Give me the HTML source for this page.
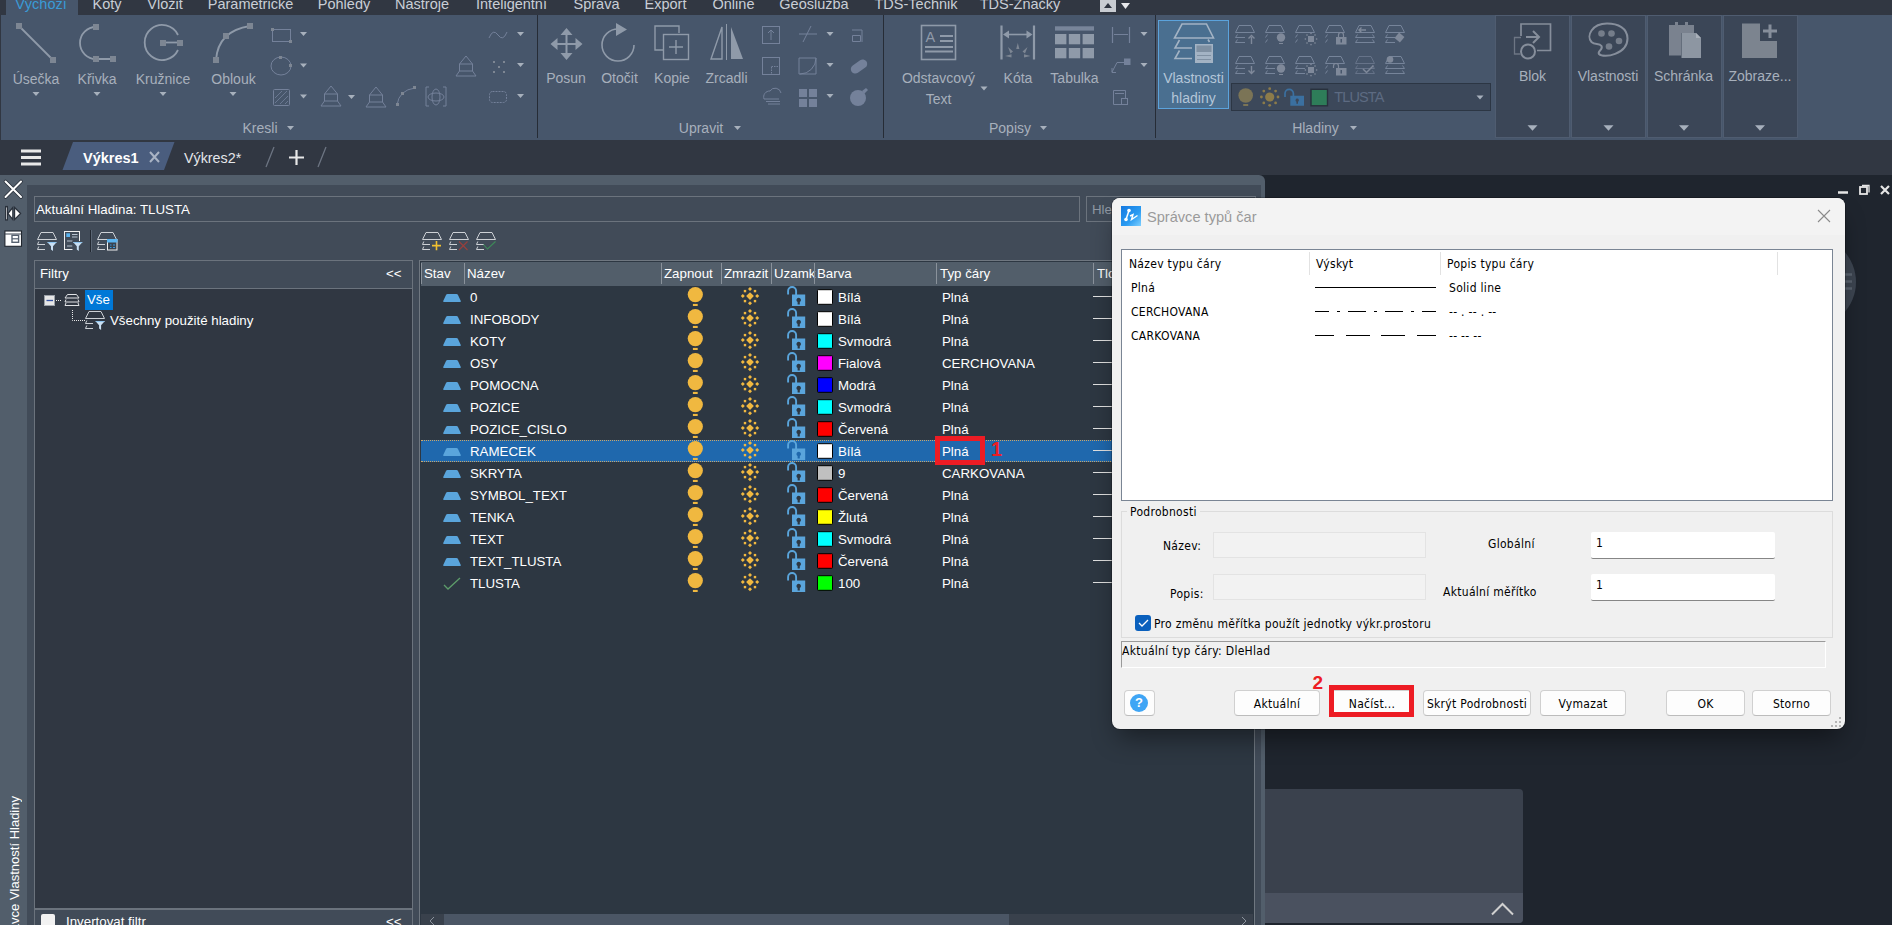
<!DOCTYPE html><html lang="cs"><head><meta charset="utf-8"><title>Správce typů čar</title><style>
*{box-sizing:border-box}
html,body{margin:0;padding:0}
body{width:1892px;height:925px;overflow:hidden;position:relative;background:#1f252e;font-family:"Liberation Sans",sans-serif}
.a{position:absolute}
.t{position:absolute;white-space:nowrap;overflow:visible}
svg{position:absolute;left:0;top:0;overflow:visible}
.dlg{font-family:"DejaVu Sans Condensed","DejaVu Sans","Liberation Sans",sans-serif;letter-spacing:0.3px}
</style></head><body>
<div class="a" style="left:0px;top:0px;width:1892px;height:15px;background:#313742;"></div>
<div class="a" style="left:6px;top:0px;width:72px;height:15px;background:#47566b;"></div>
<div class="t" style="left:-79.0px;width:240px;text-align:center;top:-5.2px;height:18.5px;line-height:18.5px;font-size:14.5px;color:#3a9bd6;">Výchozí</div>
<div class="t" style="left:-13.0px;width:240px;text-align:center;top:-5.2px;height:18.5px;line-height:18.5px;font-size:14.5px;color:#c9ced6;">Koty</div>
<div class="t" style="left:45.0px;width:240px;text-align:center;top:-5.2px;height:18.5px;line-height:18.5px;font-size:14.5px;color:#c9ced6;">Vložit</div>
<div class="t" style="left:130.5px;width:240px;text-align:center;top:-5.2px;height:18.5px;line-height:18.5px;font-size:14.5px;color:#c9ced6;">Parametrické</div>
<div class="t" style="left:224.0px;width:240px;text-align:center;top:-5.2px;height:18.5px;line-height:18.5px;font-size:14.5px;color:#c9ced6;">Pohledy</div>
<div class="t" style="left:302.0px;width:240px;text-align:center;top:-5.2px;height:18.5px;line-height:18.5px;font-size:14.5px;color:#c9ced6;">Nástroje</div>
<div class="t" style="left:391.5px;width:240px;text-align:center;top:-5.2px;height:18.5px;line-height:18.5px;font-size:14.5px;color:#c9ced6;">Inteligentní</div>
<div class="t" style="left:476.5px;width:240px;text-align:center;top:-5.2px;height:18.5px;line-height:18.5px;font-size:14.5px;color:#c9ced6;">Správa</div>
<div class="t" style="left:545.5px;width:240px;text-align:center;top:-5.2px;height:18.5px;line-height:18.5px;font-size:14.5px;color:#c9ced6;">Export</div>
<div class="t" style="left:613.5px;width:240px;text-align:center;top:-5.2px;height:18.5px;line-height:18.5px;font-size:14.5px;color:#c9ced6;">Online</div>
<div class="t" style="left:694.0px;width:240px;text-align:center;top:-5.2px;height:18.5px;line-height:18.5px;font-size:14.5px;color:#c9ced6;">Geoslužba</div>
<div class="t" style="left:796.0px;width:240px;text-align:center;top:-5.2px;height:18.5px;line-height:18.5px;font-size:14.5px;color:#c9ced6;">TDS-Technik</div>
<div class="t" style="left:900.0px;width:240px;text-align:center;top:-5.2px;height:18.5px;line-height:18.5px;font-size:14.5px;color:#c9ced6;">TDS-Značky</div>
<div class="a" style="left:1100px;top:0px;width:16px;height:12px;background:#c8ccd2;"></div>
<svg width="1892" height="15"><path d="M1104 8 L1108 3 L1112 8Z" fill="#2e3440"/><path d="M1121 3 L1130 3 L1125.5 9Z" fill="#e6e8eb"/></svg>
<div class="a" style="left:0px;top:15px;width:1892px;height:125px;background:#313742;"></div>
<div class="a" style="left:1px;top:15px;width:1891px;height:125px;background:#47566b;"></div>
<div class="a" style="left:537px;top:15px;width:1px;height:123px;background:#262c36;"></div>
<div class="a" style="left:883px;top:15px;width:1px;height:123px;background:#262c36;"></div>
<div class="a" style="left:1155px;top:15px;width:1px;height:123px;background:#262c36;"></div>
<div class="a" style="left:1495px;top:15px;width:75px;height:122.5px;background:#3b4657;border:1px solid #4f5c70"></div>
<div class="a" style="left:1571px;top:15px;width:75px;height:122.5px;background:#3b4657;border:1px solid #4f5c70"></div>
<div class="a" style="left:1647px;top:15px;width:75px;height:122.5px;background:#3b4657;border:1px solid #4f5c70"></div>
<div class="a" style="left:1723px;top:15px;width:75px;height:122.5px;background:#3b4657;border:1px solid #4f5c70"></div>
<div class="t" style="left:925.5px;top:28.0px;height:18.5px;line-height:18.5px;font-size:14.5px;color:#8f9aa9;">A</div>
<div class="a" style="left:1158px;top:20px;width:71px;height:89px;background:#4a6f90;border:1px solid #5ba3dc"></div>
<div class="a" style="left:1231px;top:83px;width:260px;height:28px;background:#3c485a;border:1px solid #2c3644"></div>
<div class="t" style="left:1334.3px;top:88.2px;height:18.5px;line-height:18.5px;font-size:14.5px;color:#5d6b82;letter-spacing:-0.9px">TLUSTA</div>
<svg width="1892" height="140"><g fill="none" stroke="#8f9aa9" stroke-width="1.800"><path d="M19 26 L53 60"/><path d="M96 27 A16 16 0 0 0 96 59 L113 59"/><path d="M178 35 A17.5 17.5 0 1 0 178 50"/><path d="M162 42.5 L180 42.5"/><path d="M216 60 Q218 31 250 26"/></g><g fill="#7d8693"><rect x="16" y="23" width="6" height="6"/><rect x="50" y="57" width="6" height="6"/><rect x="93" y="24" width="6" height="6"/><rect x="93" y="56" width="6" height="6"/><rect x="110" y="56" width="6" height="6"/><rect x="160" y="40" width="6" height="6"/><rect x="177" y="40" width="6" height="6"/><rect x="213" y="57" width="6" height="6"/><rect x="223" y="33" width="6" height="6"/><rect x="247" y="23" width="6" height="6"/></g><g fill="none" stroke="#74819a" stroke-width="1"><rect x="272.5" y="29.5" width="18" height="12"/><ellipse cx="281" cy="66" rx="10" ry="9"/><rect x="273.5" y="89.5" width="16" height="16" rx="1"/><path d="M275 103 L287 91 M275 98 L282 91 M280 104 L288 96 M285 104 L288 101" stroke-width="0.8"/><path d="M331 86 L324.5 94 L337.5 94Z M324.5 94 L324.5 101 L337.5 101 L337.5 94 M324.5 101 L321 106 L341 106 L337.5 101"/><path d="M376 87 L369.5 95 L382.5 95Z M369.5 95 L369.5 102 L382.5 102 L382.5 95 M369.5 102 L366 107 L386 107 L382.5 102"/><path d="M466 56 L459.5 64 L472.5 64Z M459.5 64 L459.5 71 L472.5 71 L472.5 64 M459.5 71 L456 76 L476 76 L472.5 71"/><path d="M397 105 Q399 90 415 88"/><path d="M429 87 L426 87 L426 106 L429 106 M443 87 L446 87 L446 106 L443 106"/><ellipse cx="436" cy="97" rx="4" ry="8"/><ellipse cx="436" cy="97" rx="8" ry="4"/><path d="M489 38 Q493 28 498 35 T507 32"/><rect x="489.5" y="91.5" width="17" height="11" rx="3" stroke-dasharray="2 1"/></g><g fill="#7d8693"><rect x="271" y="28" width="3" height="3"/><rect x="289" y="40" width="3" height="3"/><rect x="279" y="56" width="3" height="3"/><rect x="289" y="64" width="3" height="3"/><rect x="396" y="103" width="3" height="3"/><rect x="401" y="92" width="3" height="3"/><rect x="413" y="86" width="3" height="3"/><rect x="493" y="61" width="2" height="2"/><rect x="503" y="61" width="2" height="2"/><rect x="498" y="66" width="2" height="2"/><rect x="493" y="71" width="2" height="2"/><rect x="503" y="71" width="2" height="2"/></g><path d="M32.5 92.0 L39.5 92.0 L36 96.0Z" fill="#a7b0bc"/><path d="M93.5 92.0 L100.5 92.0 L97 96.0Z" fill="#a7b0bc"/><path d="M159.5 92.0 L166.5 92.0 L163 96.0Z" fill="#a7b0bc"/><path d="M229.5 92.0 L236.5 92.0 L233 96.0Z" fill="#a7b0bc"/><path d="M300.0 32.0 L307.0 32.0 L303.5 36.0Z" fill="#a7b0bc"/><path d="M300.0 63.5 L307.0 63.5 L303.5 67.5Z" fill="#a7b0bc"/><path d="M300.0 94.5 L307.0 94.5 L303.5 98.5Z" fill="#a7b0bc"/><path d="M348.0 95.0 L355.0 95.0 L351.5 99.0Z" fill="#a7b0bc"/><path d="M517.0 32.0 L524.0 32.0 L520.5 36.0Z" fill="#a7b0bc"/><path d="M517.0 63.0 L524.0 63.0 L520.5 67.0Z" fill="#a7b0bc"/><path d="M517.0 94.0 L524.0 94.0 L520.5 98.0Z" fill="#a7b0bc"/><path d="M287.0 126.0 L294.0 126.0 L290.5 130.0Z" fill="#a7b0bc"/><g fill="none" stroke="#8f9aa9" stroke-width="1.6"><path d="M566.5 33 L566.5 55 M555 44 L578 44" stroke-width="2"/><path d="M560.5 35 L566.5 28 L572.5 35Z M560.5 53 L566.5 60 L572.5 53Z M557.5 38 L550.5 44 L557.5 50Z M575.5 38 L582.5 44 L575.5 50Z" fill="#8f9aa9" stroke="none"/><path d="M618 29 A16 16 0 1 0 634 45"/></g><path d="M616 23 L627 29.5 L616 36Z" fill="#8f9aa9"/><g fill="none" stroke="#8f9aa9" stroke-width="1.4"><path d="M663 50 L655 50 L655 26 L679 26 L679 33"/><rect x="663.5" y="34.5" width="25" height="25"/><path d="M676 40 L676 54 M669 47 L683 47"/><path d="M722 27 L722 59 L711 59Z"/><path d="M726.5 24 L726.5 60" stroke-width="1"/></g><path d="M731 27 L731 59 L743 59Z" fill="#8f9aa9"/><g fill="none" stroke="#74819a" stroke-width="1"><rect x="762.5" y="26.5" width="17" height="17"/><path d="M771 40 L771 30 M768 33 L771 30 L774 33"/><rect x="762.5" y="57.5" width="17" height="17"/><rect x="771.5" y="66.5" width="8" height="8" stroke-dasharray="1.5 1"/><path d="M764 99 A6 6 0 0 1 770 91 A6 6 0 0 1 781 93 M764 99 L779 99 M768 104 L780 104 M766 101.5 L780 101.5"/><path d="M799 34 L817 34 M811 26 L803 42"/><path d="M799 74 L799 58 L816 58 L816 74 Z M800 74 A16 16 0 0 0 816 58"/><path d="M852 30 L862 30 L862 42 M852.5 35.5 L860.5 35.5 L860.5 41.5 L852.5 41.5Z"/></g><g fill="#74819a"><rect x="799" y="89" width="8" height="8"/><rect x="809" y="89" width="8" height="8"/><rect x="799" y="99" width="8" height="8"/><rect x="809" y="99" width="8" height="8"/><rect x="850" y="62" width="18" height="9" rx="4.5" transform="rotate(-35 859 66.5)"/><circle cx="858" cy="98" r="8"/><path d="M862 91 L866 88 L868 90 L864 94Z"/></g><path d="M826.5 32.0 L833.5 32.0 L830 36.0Z" fill="#a7b0bc"/><path d="M826.5 63.0 L833.5 63.0 L830 67.0Z" fill="#a7b0bc"/><path d="M826.5 94.0 L833.5 94.0 L830 98.0Z" fill="#a7b0bc"/><path d="M734.0 126.0 L741.0 126.0 L737.5 130.0Z" fill="#a7b0bc"/><g fill="none" stroke="#8f9aa9" stroke-width="1.6"><rect x="921.5" y="25.5" width="34" height="34"/><path d="M940 36 L953 36 M940 41 L953 41 M925 47 L953 47 M925 51.5 L953 51.5" stroke-width="2"/><path d="M1001.5 25.5 L1001.5 59.5 M1034 25.5 L1034 59.5" stroke-width="2.2"/><path d="M1006 34.500 L1030 34.500" stroke-width="1.6"/></g><path d="M1003 34.500 L1009 30.500 L1009 38.500Z M1032.500 34.500 L1026.500 30.500 L1026.500 38.500Z" fill="#8f9aa9"/><g fill="none" stroke="#74819a" stroke-width="1"><path d="M1112.500 27 L1112.500 43 M1129.500 27 L1129.500 43 M1114 34.500 L1128 34.500" stroke-width="1.2"/><path d="M1112 72 L1117 62.500 L1126 62.500 M1112 68 L1112 72.500 L1116 72.500"/><path d="M1113.500 90.500 L1125.500 90.500 L1125.500 104.500 L1113.500 104.500Z M1115 93.500 L1124 93.500"/><rect x="1121.500" y="98.500" width="6" height="6" fill="#47566b"/></g><g fill="#8f9aa9"><rect x="1124" y="58.500" width="6.500" height="6.500" fill="#74819a"/><rect x="1055" y="26.300" width="39" height="4.300" fill="#78859a"/><rect x="1055.0" y="34" width="11.400" height="10.300"/><rect x="1068.8" y="34" width="11.400" height="10.300"/><rect x="1082.6" y="34" width="11.400" height="10.300"/><rect x="1055.0" y="48" width="11.400" height="10.300"/><rect x="1068.8" y="48" width="11.400" height="10.300"/><rect x="1082.6" y="48" width="11.400" height="10.300"/></g><g fill="#7d8693"><path d="M1017.800 43 l1.600 6 l-3.200 0Z M1008 47 l5 4.500 l-2.500 2Z M1027.500 47 l-5 4.500 l2.500 2Z M1005 56 l6.500 -1.800 l0 3.200Z M1030.500 56 l-6.500 -1.800 l0 3.200Z"/></g><path d="M980.5 86.5 L987.5 86.5 L984 90.5Z" fill="#a7b0bc"/><path d="M1140.5 32.0 L1147.5 32.0 L1144 36.0Z" fill="#a7b0bc"/><path d="M1140.5 63.0 L1147.5 63.0 L1144 67.0Z" fill="#a7b0bc"/><path d="M1040.0 126.0 L1047.0 126.0 L1043.5 130.0Z" fill="#a7b0bc"/><g fill="none" stroke="#76849a" stroke-width="1"><path d="M1239 25.5 L1251 25.5 L1254.5 32.5 L1235.5 32.5Z"/><path d="M1237.5 34.5 L1235.5 37.5 L1245 37.5 M1237.5 39.5 L1235.5 42.5 L1245 42.5"/></g><path d="M1251.5 44 v-7 M1248.5 38.5 l3 -3 l3 3" fill="none" stroke="#7f899a" stroke-width="1.400"/><g fill="none" stroke="#76849a" stroke-width="1"><path d="M1269 25.5 L1281 25.5 L1284.5 32.5 L1265.5 32.5Z"/><path d="M1267.5 34.5 L1265.5 37.5 L1265.5 37.5 M1267.5 39.5 L1265.5 42.5 L1265.5 42.5"/></g><circle cx="1281" cy="37.5" r="4.200" fill="#7f899a"/><path d="M1279 43.5 h4" stroke="#7f899a"/><g fill="none" stroke="#76849a" stroke-width="1"><path d="M1299 25.5 L1311 25.5 L1314.5 32.5 L1295.5 32.5Z"/><path d="M1297.5 34.5 L1295.5 37.5 L1295.5 37.5 M1297.5 39.5 L1295.5 42.5 L1295.5 42.5"/></g><rect x="1308" y="36" width="6" height="6" fill="#7f899a"/><rect x="1315.9" y="38.3" width="1.400" height="1.400" fill="#7f899a"/><rect x="1314.3" y="42.3" width="1.400" height="1.400" fill="#7f899a"/><rect x="1310.3" y="43.9" width="1.400" height="1.400" fill="#7f899a"/><rect x="1306.3" y="42.3" width="1.400" height="1.400" fill="#7f899a"/><rect x="1304.7" y="38.3" width="1.400" height="1.400" fill="#7f899a"/><rect x="1306.3" y="34.3" width="1.400" height="1.400" fill="#7f899a"/><rect x="1310.3" y="32.7" width="1.400" height="1.400" fill="#7f899a"/><rect x="1314.3" y="34.3" width="1.400" height="1.400" fill="#7f899a"/><g fill="none" stroke="#76849a" stroke-width="1"><path d="M1329 25.5 L1341 25.5 L1344.5 32.5 L1325.5 32.5Z"/><path d="M1327.5 34.5 L1325.5 37.5 L1325.5 37.5 M1327.5 39.5 L1325.5 42.5 L1325.5 42.5"/></g><path d="M1338.5 37 v-2 a2.500 2.500 0 0 1 5 0 v2" fill="none" stroke="#7f899a" stroke-width="1.200"/><rect x="1336" y="37" width="10.500" height="7.500" fill="#7f899a"/><rect x="1340.5" y="39" width="1.500" height="3.500" fill="#47566b"/><g fill="none" stroke="#76849a" stroke-width="1"><path d="M1359 25.5 L1371 25.5 L1374.5 32.5 L1355.5 32.5Z"/><path d="M1357.5 34.5 L1355.5 37.5 L1374.5 37.5 L1372.5 34.5 M1357.5 39.5 L1355.5 42.5 L1374.5 42.5 L1372.5 39.5"/></g><path d="M1366 30 h-7 m2.500 -2.500 l-2.500 2.500 l2.500 2.500" fill="none" stroke="#7f899a" stroke-width="1.400"/><g fill="none" stroke="#76849a" stroke-width="1"><path d="M1389 25.5 L1401 25.5 L1404.5 32.5 L1385.5 32.5Z"/><path d="M1387.5 34.5 L1385.5 37.5 L1395 37.5 M1387.5 39.5 L1385.5 42.5 L1395 42.5"/></g><rect x="1396" y="34" width="7" height="7" transform="rotate(40 1399.5 37.5)" fill="#7f899a"/><g fill="none" stroke="#76849a" stroke-width="1"><path d="M1239 56.5 L1251 56.5 L1254.5 63.5 L1235.5 63.5Z"/><path d="M1237.5 65.5 L1235.5 68.5 L1245 68.5 M1237.5 70.5 L1235.5 73.5 L1245 73.5"/></g><path d="M1251.5 66 v7 M1248.5 70.5 l3 3 l3 -3" fill="none" stroke="#7f899a" stroke-width="1.400"/><g fill="none" stroke="#76849a" stroke-width="1"><path d="M1269 56.5 L1281 56.5 L1284.5 63.5 L1265.5 63.5Z"/><path d="M1267.5 65.5 L1265.5 68.5 L1275 68.5 M1267.5 70.5 L1265.5 73.5 L1275 73.5"/></g><circle cx="1281" cy="68.5" r="4.200" fill="#7f899a"/><path d="M1279 74.5 h4" stroke="#7f899a"/><g fill="none" stroke="#76849a" stroke-width="1"><path d="M1299 56.5 L1311 56.5 L1314.5 63.5 L1295.5 63.5Z"/><path d="M1297.5 65.5 L1295.5 68.5 L1305 68.5 M1297.5 70.5 L1295.5 73.5 L1305 73.5"/></g><rect x="1308" y="67" width="6" height="6" fill="#7f899a"/><rect x="1315.9" y="69.3" width="1.400" height="1.400" fill="#7f899a"/><rect x="1314.3" y="73.3" width="1.400" height="1.400" fill="#7f899a"/><rect x="1310.3" y="74.9" width="1.400" height="1.400" fill="#7f899a"/><rect x="1306.3" y="73.3" width="1.400" height="1.400" fill="#7f899a"/><rect x="1304.7" y="69.3" width="1.400" height="1.400" fill="#7f899a"/><rect x="1306.3" y="65.3" width="1.400" height="1.400" fill="#7f899a"/><rect x="1310.3" y="63.7" width="1.400" height="1.400" fill="#7f899a"/><rect x="1314.3" y="65.3" width="1.400" height="1.400" fill="#7f899a"/><g fill="none" stroke="#76849a" stroke-width="1"><path d="M1329 56.5 L1341 56.5 L1344.5 63.5 L1325.5 63.5Z"/><path d="M1327.5 65.5 L1325.5 68.5 L1325.5 68.5 M1327.5 70.5 L1325.5 73.5 L1325.5 73.5"/></g><path d="M1333.5 68 v-2 a2.500 2.500 0 0 1 5 0 v2" fill="none" stroke="#7f899a" stroke-width="1.200"/><rect x="1336" y="68" width="10.500" height="7.500" fill="#7f899a"/><rect x="1340.5" y="70" width="1.500" height="3.500" fill="#47566b"/><g fill="none" stroke="#667389" stroke-width="1"><path d="M1359 56.5 L1371 56.5 L1374.5 63.5 L1355.5 63.5Z"/><path d="M1357.5 65.5 L1355.5 68.5 L1374.5 68.5 L1372.5 65.5 M1357.5 70.5 L1355.5 73.5 L1374.5 73.5 L1372.5 70.5"/></g><path d="M1363 69 l3.500 3.500 l7 -7" fill="none" stroke="#7f899a" stroke-width="1.500"/><g fill="none" stroke="#76849a" stroke-width="1"><path d="M1389 56.5 L1401 56.5 L1404.5 63.5 L1385.5 63.5Z"/><path d="M1387.5 65.5 L1385.5 68.5 L1404.5 68.5 L1402.5 65.5 M1387.5 70.5 L1385.5 73.5 L1404.5 73.5 L1402.5 70.5"/></g><circle cx="1390" cy="59.5" r="3.300" fill="#7f899a"/><g fill="none" stroke="#a3b3c4" stroke-width="1.600"><path d="M1182 24 L1206.500 24 L1213.500 38 L1174.500 38Z"/><path d="M1179.500 40 L1175 48 L1192 48 M1179.500 50.500 L1175 58.500 L1192 58.500 M1208 39.500 L1209.500 42"/></g><rect x="1195" y="44" width="18" height="19" fill="#a3b3c4"/><rect x="1196.500" y="45.500" width="15" height="6.500" fill="#7f90a2"/><path d="M1197 55.500 h14 M1197 59.500 h14" stroke="#7f90a2" stroke-width="1"/><circle cx="1245.700" cy="95.500" r="7.300" fill="#7b7456"/><rect x="1243.200" y="104" width="5" height="2" fill="#7b7456"/><g fill="#8c7b4a"><circle cx="1269.700" cy="97" r="4.600"/><circle cx="1278.0" cy="97.0" r="1.400"/><circle cx="1275.6" cy="102.9" r="1.400"/><circle cx="1269.7" cy="105.3" r="1.400"/><circle cx="1263.8" cy="102.9" r="1.400"/><circle cx="1261.4" cy="97.0" r="1.400"/><circle cx="1263.8" cy="91.1" r="1.400"/><circle cx="1269.7" cy="88.7" r="1.400"/><circle cx="1275.6" cy="91.1" r="1.400"/></g><path d="M1285 97 L1285 93.500 A4.200 4.200 0 0 1 1293.400 93.500 L1293.400 96" fill="none" stroke="#3b70a0" stroke-width="1.700"/><path d="M1290.300 95.800 h13.700 v10 h-13.700Z M1297.200 98.600 a1.700 1.700 0 0 0 -0.800 3.200 v2 h1.600 v-2 a1.700 1.700 0 0 0 -0.800 -3.200Z" fill="#3b70a0" fill-rule="evenodd"/><rect x="1311" y="89.300" width="16.500" height="16.500" fill="#2e7d59" stroke="#28313d" stroke-width="1.400"/><path d="M1476.5 95.5 L1483.5 95.5 L1480 99.5Z" fill="#a7b0bc"/><path d="M1350.0 126.0 L1357.0 126.0 L1353.5 130.0Z" fill="#a7b0bc"/><g fill="none" stroke="#868e9b" stroke-width="1.700"><path d="M1521 36 L1521 24 L1550.500 24 L1550.500 50.500 L1537 50.500"/><path d="M1521 37.500 L1514.500 37.500 L1514.500 54 L1520 54" stroke="#6d7684" stroke-width="1.300"/><circle cx="1528" cy="51.500" r="7" stroke-width="2"/><path d="M1526 37 L1539 37 M1533 31 L1539 37 L1533 43" stroke-width="2"/><path d="M1607 23.500 C1592 23.500 1586 36 1591.500 42 C1595 45.500 1599 42.500 1601.500 46 C1603.500 50 1597 51 1599 54 C1604 59 1627.500 54 1627.500 38.500 C1627.500 28 1618 23.500 1607 23.500Z" stroke-width="2"/></g><g fill="#757d8a"><circle cx="1601.500" cy="33.500" r="3.300"/><circle cx="1611.500" cy="33.500" r="3.300"/><circle cx="1619" cy="41" r="3.300"/><circle cx="1609" cy="46.500" r="3.300"/></g><path d="M1669 25 L1694 25 L1694 33 L1681 33 L1681 55.500 L1669 55.500Z" fill="#7a828f"/><rect x="1675" y="22" width="13" height="6.500" fill="#7a828f"/><rect x="1678" y="22" width="7" height="3" fill="#3b4657"/><path d="M1681.500 33 L1696 33 L1701 38 L1701 58 L1681.500 58Z" fill="#8d96a2"/><path d="M1696 33 L1696 38 L1701 38Z" fill="#a9b0ba"/><path d="M1742 23.500 L1760 23.500 L1760 41 L1777 41 L1777 58 L1742 58Z" fill="#7c848f"/><path d="M1768.500 24.500 L1771.500 24.500 L1771.500 29.500 L1777 29.500 L1777 32.500 L1771.500 32.500 L1771.500 38 L1768.500 38 L1768.500 32.500 L1763 32.500 L1763 29.500 L1768.500 29.500Z" fill="#868e9b"/><path d="M1527.5 125.25 L1537.5 125.25 L1532.5 130.75Z" fill="#a7b0bc"/><path d="M1603.5 125.25 L1613.5 125.25 L1608.5 130.75Z" fill="#a7b0bc"/><path d="M1679.0 125.25 L1689.0 125.25 L1684 130.75Z" fill="#a7b0bc"/><path d="M1755.0 125.25 L1765.0 125.25 L1760 130.75Z" fill="#a7b0bc"/></svg>
<div class="t" style="left:-84.0px;width:240px;text-align:center;top:70.0px;height:18px;line-height:18px;font-size:14px;color:#a7b0bc;">Úsečka</div>
<div class="t" style="left:-23.0px;width:240px;text-align:center;top:70.0px;height:18px;line-height:18px;font-size:14px;color:#a7b0bc;">Křivka</div>
<div class="t" style="left:43.0px;width:240px;text-align:center;top:70.0px;height:18px;line-height:18px;font-size:14px;color:#a7b0bc;">Kružnice</div>
<div class="t" style="left:113.5px;width:240px;text-align:center;top:70.0px;height:18px;line-height:18px;font-size:14px;color:#a7b0bc;">Oblouk</div>
<div class="t" style="left:446.0px;width:240px;text-align:center;top:69.0px;height:18px;line-height:18px;font-size:14px;color:#a7b0bc;">Posun</div>
<div class="t" style="left:499.5px;width:240px;text-align:center;top:69.0px;height:18px;line-height:18px;font-size:14px;color:#a7b0bc;">Otočit</div>
<div class="t" style="left:552.0px;width:240px;text-align:center;top:69.0px;height:18px;line-height:18px;font-size:14px;color:#a7b0bc;">Kopie</div>
<div class="t" style="left:606.5px;width:240px;text-align:center;top:69.0px;height:18px;line-height:18px;font-size:14px;color:#a7b0bc;">Zrcadli</div>
<div class="t" style="left:898.0px;width:240px;text-align:center;top:69.0px;height:18px;line-height:18px;font-size:14px;color:#a7b0bc;">Kóta</div>
<div class="t" style="left:954.5px;width:240px;text-align:center;top:69.0px;height:18px;line-height:18px;font-size:14px;color:#a7b0bc;">Tabulka</div>
<div class="t" style="left:818.5px;width:240px;text-align:center;top:69.3px;height:18px;line-height:18px;font-size:14px;color:#a7b0bc;">Odstavcový</div>
<div class="t" style="left:818.5px;width:240px;text-align:center;top:89.5px;height:18px;line-height:18px;font-size:14px;color:#a7b0bc;">Text</div>
<div class="t" style="left:140.0px;width:240px;text-align:center;top:119.0px;height:18px;line-height:18px;font-size:14px;color:#a7b0bc;">Kresli</div>
<div class="t" style="left:581.0px;width:240px;text-align:center;top:119.0px;height:18px;line-height:18px;font-size:14px;color:#a7b0bc;">Upravit</div>
<div class="t" style="left:890.0px;width:240px;text-align:center;top:119.0px;height:18px;line-height:18px;font-size:14px;color:#a7b0bc;">Popisy</div>
<div class="t" style="left:1195.5px;width:240px;text-align:center;top:119.0px;height:18px;line-height:18px;font-size:14px;color:#a7b0bc;">Hladiny</div>
<div class="t" style="left:1073.5px;width:240px;text-align:center;top:68.5px;height:18px;line-height:18px;font-size:14px;color:#b4c6d8;">Vlastnosti</div>
<div class="t" style="left:1073.5px;width:240px;text-align:center;top:88.5px;height:18px;line-height:18px;font-size:14px;color:#b4c6d8;">hladiny</div>
<div class="t" style="left:1412.5px;width:240px;text-align:center;top:66.5px;height:18px;line-height:18px;font-size:14px;color:#a7b0bc;">Blok</div>
<div class="t" style="left:1488.0px;width:240px;text-align:center;top:66.5px;height:18px;line-height:18px;font-size:14px;color:#a7b0bc;">Vlastnosti</div>
<div class="t" style="left:1563.5px;width:240px;text-align:center;top:66.5px;height:18px;line-height:18px;font-size:14px;color:#a7b0bc;">Schránka</div>
<div class="t" style="left:1640.0px;width:240px;text-align:center;top:66.5px;height:18px;line-height:18px;font-size:14px;color:#a7b0bc;">Zobraze...</div>
<div class="a" style="left:0px;top:140px;width:1892px;height:35px;background:#313742;"></div>
<svg width="1892" height="180"><path d="M73 142 L174.5 142 L164 170 L62.5 170Z" fill="#4a5d7e"/><g stroke="#e8e8e8" stroke-width="3"><path d="M21 151 L41 151 M21 157.500 L41 157.500 M21 164 L41 164"/></g><g stroke="#a9b3c4" stroke-width="2"><path d="M150 152 L159 162 M159 152 L150 162"/></g><g stroke="#6c7482" stroke-width="1.3"><path d="M274 147 L266 167 M326 147 L318 167"/></g><g stroke="#e8e8e8" stroke-width="2.200"><path d="M289 157.500 L304 157.500 M296.500 150 L296.500 165"/></g></svg>
<div class="t" style="left:83px;top:149.1px;height:18.5px;line-height:18.5px;font-size:14.5px;color:#fff;font-weight:bold">Výkres1</div>
<div class="t" style="left:184px;top:149.2px;height:18.3px;line-height:18.3px;font-size:14.3px;color:#e4e6ea;">Výkres2*</div>
<div class="a" style="left:0px;top:175px;width:1265px;height:750px;background:#525e6b;border-top-right-radius:6px"></div>
<div class="a" style="left:27px;top:185px;width:1234px;height:740px;background:#414b58;"></div>
<svg width="40" height="260"><path d="M5.500 181.500 L21 197 M21 181.500 L5.500 197" stroke="#2a313b" stroke-width="3.600" stroke-linecap="round" fill="none"/><path d="M5.500 181.500 L21 197 M21 181.500 L5.500 197" stroke="#fff" stroke-width="2" stroke-linecap="round" fill="none"/><g stroke="#2a313b" stroke-width="1.200"><rect x="5.600" y="206.500" width="1.800" height="13.500" fill="#fff"/><path d="M7.900 213.500 L12.800 207.500 L12.800 219.500Z M20.600 213.500 L14.600 207.500 L14.600 219.500Z" fill="#fff"/></g><rect x="4.900" y="231" width="16.600" height="15.300" fill="#fff" stroke="#20262e" stroke-width="1.100"/><path d="M5 234 L21.500 234" stroke="#3a434f" stroke-width="1"/><rect x="12" y="235.300" width="6.600" height="7" fill="#fff" stroke="#56616f" stroke-width="1.400"/><path d="M12 238.800 L18.600 238.800" stroke="#56616f" stroke-width="1.200"/></svg>
<div class="a" style="left:6px;top:796px;writing-mode:vertical-rl;transform:rotate(180deg);font-size:13px;line-height:18px;width:18px;white-space:nowrap;color:#fff">Správce Vlastností Hladiny</div>
<div class="a" style="left:34px;top:196px;width:1046px;height:26px;border:1px solid #6b737d"></div>
<div class="t" style="left:36px;top:200.8px;height:17.3px;line-height:17.3px;font-size:13.3px;color:#fff;">Aktuální Hladina: TLUSTA</div>
<div class="a" style="left:1086px;top:196px;width:170px;height:26px;border:1px solid #6b737d"></div>
<div class="t" style="left:1092px;top:200.8px;height:17.3px;line-height:17.3px;font-size:13.3px;color:#8f98a3;">Hle</div>
<svg width="600" height="260"><g fill="none" stroke="#cdd1d6" stroke-width="1"><path d="M41 232.5 L53 232.5 L56.5 239.5 L37.5 239.5Z"/><path d="M38.8 241.5 L37.5 244.5 L45 244.5 M38.8 246.5 L37.5 249.5 L45 249.5"/></g><path d="M47.2 242 L56.800000000000004 242 L53.0 246.3 L53.0 251 L51.0 249.5 L51.0 246.3Z" fill="#c9dff3"/><path d="M47.2 242 L56.800000000000004 242 L55.900000000000006 243 L48.1 243Z" fill="#8ec4ee"/><rect x="64.500" y="231.500" width="15" height="18" fill="none" stroke="#f0f0f0"/><path d="M72 234.500 h5.500 M72 237 h5.500 M67 241 h5.500 M67 246 h5.500" stroke="#b8c4d0"/><rect x="66.300" y="233.300" width="3.700" height="3.700" fill="#5bb4f0"/><rect x="72.500" y="241" width="10.500" height="10" fill="#414b58"/><path d="M73 242 L82.6 242 L78.8 246.3 L78.8 251 L76.8 249.5 L76.8 246.3Z" fill="#c9dff3"/><path d="M73 242 L82.6 242 L81.7 243 L73.9 243Z" fill="#8ec4ee"/><path d="M90.500 230 L90.500 252" stroke="#222831"/><path d="M91.500 230 L91.500 252" stroke="#5a6573"/><g fill="none" stroke="#cdd1d6" stroke-width="1"><path d="M101 232.5 L113 232.5 L116.5 239.5 L97.5 239.5Z"/><path d="M98.8 241.5 L97.5 244.5 L105 244.5 M98.8 246.5 L97.5 249.5 L105 249.5"/></g><rect x="107.500" y="239.500" width="9.500" height="10.500" fill="#39434f" stroke="#f0f0f0"/><rect x="107" y="239" width="10.500" height="3.500" fill="#5bb4f0"/><path d="M110 245 h1.500 M113 245 h2 M110 247.500 h1.500 M113 247.500 h2" stroke="#3a9be0"/><g fill="none" stroke="#cdd1d6" stroke-width="1"><path d="M426 232.5 L438 232.5 L441.5 239.5 L422.5 239.5Z"/><path d="M423.8 241.5 L422.5 244.5 L430 244.5 M423.8 246.5 L422.5 249.5 L430 249.5"/></g><path d="M432 245.600 h9 M436.500 241 v9.200" stroke="#f0c030" stroke-width="1.600"/><g fill="none" stroke="#cdd1d6" stroke-width="1"><path d="M453 232.5 L465 232.5 L468.5 239.5 L449.5 239.5Z"/><path d="M450.8 241.5 L449.5 244.5 L457 244.5 M450.8 246.5 L449.5 249.5 L457 249.5"/></g><path d="M459 241.500 l8.500 8.500 M467.500 241.500 l-8.500 8.500" stroke="#9a3f3c" stroke-width="1.100"/><g fill="none" stroke="#cdd1d6" stroke-width="1"><path d="M480 232.5 L492 232.5 L495.5 239.5 L476.5 239.5Z"/><path d="M477.8 241.5 L476.5 244.5 L484 244.5 M477.8 246.5 L476.5 249.5 L484 249.5"/></g><path d="M483.500 244.500 l4 4.500 l8 -7.500" stroke="#3d8a58" stroke-width="1.100" fill="none"/></svg>
<div class="a" style="left:34px;top:260px;width:379px;height:649px;background:#303742;border:1px solid #6b737d"></div>
<div class="a" style="left:35px;top:261px;width:377px;height:28px;background:#414b58;border-bottom:1px solid #6b737d"></div>
<div class="t" style="left:40px;top:265.4px;height:17.3px;line-height:17.3px;font-size:13.3px;color:#fff;">Filtry</div>
<div class="t" style="left:386px;top:265.4px;height:17.3px;line-height:17.3px;font-size:13.3px;color:#fff;">&lt;&lt;</div>
<svg width="420" height="340"><rect x="44.500" y="295.500" width="10" height="10" fill="#e6e6e6" stroke="#9aa0a8"/><path d="M46.500 300.500 h6.500" stroke="#3452a4" stroke-width="1.300"/><path d="M56 300.500 h6 M72.500 310 v10.500 h12.500" stroke="#e8e8e8" stroke-dasharray="1 1" fill="none"/><g fill="none" stroke="#e0e2e5" stroke-width="1"><path d="M67.5 294.5 h9 l2.500 3.500 h-14Z M66.0 299.5 l-1 2.500 h14 l-1 -2.500 M66.0 303 l-1 2.500 h14 l-1 -2.500"/></g><g fill="none" stroke="#cdd1d6" stroke-width="1"><path d="M89 311.5 L101 311.5 L104.5 318.5 L85.5 318.5Z"/><path d="M86.8 320.5 L85.5 323.5 L93 323.5 M86.8 325.5 L85.5 328.5 L93 328.5"/></g><path d="M95.3 321 L104.89999999999999 321 L101.1 325.3 L101.1 330 L99.1 328.5 L99.1 325.3Z" fill="#c9dff3"/><path d="M95.3 321 L104.89999999999999 321 L104.0 322 L96.2 322Z" fill="#8ec4ee"/></svg>
<div class="a" style="left:85px;top:290px;width:28px;height:20px;background:#0078d7;"></div>
<div class="t" style="left:87px;top:291.4px;height:17.3px;line-height:17.3px;font-size:13.3px;color:#fff;">Vše</div>
<div class="t" style="left:110px;top:311.9px;height:17.3px;line-height:17.3px;font-size:13.3px;color:#fff;">Všechny použité hladiny</div>
<div class="a" style="left:34px;top:909px;width:379px;height:16px;background:#414b58;border:1px solid #6b737d;border-bottom:none"></div>
<div class="a" style="left:41px;top:914px;width:14px;height:14px;background:#f2f2f2;border-radius:2px"></div>
<div class="t" style="left:66px;top:913.4px;height:17.3px;line-height:17.3px;font-size:13.3px;color:#fff;">Invertovat filtr</div>
<div class="t" style="left:386px;top:913.4px;height:17.3px;line-height:17.3px;font-size:13.3px;color:#fff;">&lt;&lt;</div>
<div class="a" style="left:419px;top:260px;width:836px;height:670px;background:#2d3742;border:1px solid #6f7780"></div>
<div class="a" style="left:421px;top:262px;width:832px;height:24px;background:#525e6a;"></div>
<div class="a" style="left:421px;top:263px;width:1px;height:21px;background:#8a929b;"></div>
<div class="t" style="left:424px;top:265.4px;height:17.3px;line-height:17.3px;font-size:13.3px;color:#fff;">Stav</div>
<div class="a" style="left:464px;top:263px;width:1px;height:21px;background:#8a929b;"></div>
<div class="t" style="left:467px;top:265.4px;height:17.3px;line-height:17.3px;font-size:13.3px;color:#fff;">Název</div>
<div class="a" style="left:661px;top:263px;width:1px;height:21px;background:#8a929b;"></div>
<div class="t" style="left:664px;top:265.4px;height:17.3px;line-height:17.3px;font-size:13.3px;color:#fff;">Zapnout</div>
<div class="a" style="left:721px;top:263px;width:1px;height:21px;background:#8a929b;"></div>
<div class="t" style="left:724px;top:265.4px;height:17.3px;line-height:17.3px;font-size:13.3px;color:#fff;">Zmrazit</div>
<div class="a" style="left:771px;top:263px;width:1px;height:21px;background:#8a929b;"></div>
<div class="t" style="left:774px;top:265.4px;height:17.3px;line-height:17.3px;font-size:13.3px;color:#fff;">Uzamk</div>
<div class="a" style="left:814px;top:263px;width:1px;height:21px;background:#8a929b;"></div>
<div class="t" style="left:817px;top:265.4px;height:17.3px;line-height:17.3px;font-size:13.3px;color:#fff;">Barva</div>
<div class="a" style="left:936px;top:263px;width:1px;height:21px;background:#8a929b;"></div>
<div class="t" style="left:940px;top:265.4px;height:17.3px;line-height:17.3px;font-size:13.3px;color:#fff;">Typ čáry</div>
<div class="a" style="left:1093px;top:263px;width:1px;height:21px;background:#8a929b;"></div>
<div class="t" style="left:1097px;top:265.4px;height:17.3px;line-height:17.3px;font-size:13.3px;color:#fff;">Tlo</div>
<div class="t" style="left:470px;top:288.9px;height:17.3px;line-height:17.3px;font-size:13.3px;color:#fff;">0</div>
<div class="t" style="left:838px;top:288.9px;height:17.3px;line-height:17.3px;font-size:13.3px;color:#fff;">Bílá</div>
<div class="t" style="left:942px;top:288.9px;height:17.3px;line-height:17.3px;font-size:13.3px;color:#fff;">Plná</div>
<div class="t" style="left:470px;top:310.9px;height:17.3px;line-height:17.3px;font-size:13.3px;color:#fff;">INFOBODY</div>
<div class="t" style="left:838px;top:310.9px;height:17.3px;line-height:17.3px;font-size:13.3px;color:#fff;">Bílá</div>
<div class="t" style="left:942px;top:310.9px;height:17.3px;line-height:17.3px;font-size:13.3px;color:#fff;">Plná</div>
<div class="t" style="left:470px;top:332.9px;height:17.3px;line-height:17.3px;font-size:13.3px;color:#fff;">KOTY</div>
<div class="t" style="left:838px;top:332.9px;height:17.3px;line-height:17.3px;font-size:13.3px;color:#fff;">Svmodrá</div>
<div class="t" style="left:942px;top:332.9px;height:17.3px;line-height:17.3px;font-size:13.3px;color:#fff;">Plná</div>
<div class="t" style="left:470px;top:354.9px;height:17.3px;line-height:17.3px;font-size:13.3px;color:#fff;">OSY</div>
<div class="t" style="left:838px;top:354.9px;height:17.3px;line-height:17.3px;font-size:13.3px;color:#fff;">Fialová</div>
<div class="t" style="left:942px;top:354.9px;height:17.3px;line-height:17.3px;font-size:13.3px;color:#fff;">CERCHOVANA</div>
<div class="t" style="left:470px;top:376.9px;height:17.3px;line-height:17.3px;font-size:13.3px;color:#fff;">POMOCNA</div>
<div class="t" style="left:838px;top:376.9px;height:17.3px;line-height:17.3px;font-size:13.3px;color:#fff;">Modrá</div>
<div class="t" style="left:942px;top:376.9px;height:17.3px;line-height:17.3px;font-size:13.3px;color:#fff;">Plná</div>
<div class="t" style="left:470px;top:398.9px;height:17.3px;line-height:17.3px;font-size:13.3px;color:#fff;">POZICE</div>
<div class="t" style="left:838px;top:398.9px;height:17.3px;line-height:17.3px;font-size:13.3px;color:#fff;">Svmodrá</div>
<div class="t" style="left:942px;top:398.9px;height:17.3px;line-height:17.3px;font-size:13.3px;color:#fff;">Plná</div>
<div class="t" style="left:470px;top:420.9px;height:17.3px;line-height:17.3px;font-size:13.3px;color:#fff;">POZICE_CISLO</div>
<div class="t" style="left:838px;top:420.9px;height:17.3px;line-height:17.3px;font-size:13.3px;color:#fff;">Červená</div>
<div class="t" style="left:942px;top:420.9px;height:17.3px;line-height:17.3px;font-size:13.3px;color:#fff;">Plná</div>
<div class="a" style="left:421px;top:440px;width:832px;height:22px;background:#1f68ad;border-top:1px dotted #c9a66b;border-bottom:1px dotted #c9a66b"></div>
<div class="t" style="left:470px;top:442.9px;height:17.3px;line-height:17.3px;font-size:13.3px;color:#fff;">RAMECEK</div>
<div class="t" style="left:838px;top:442.9px;height:17.3px;line-height:17.3px;font-size:13.3px;color:#fff;">Bílá</div>
<div class="t" style="left:942px;top:442.9px;height:17.3px;line-height:17.3px;font-size:13.3px;color:#fff;">Plná</div>
<div class="t" style="left:470px;top:464.9px;height:17.3px;line-height:17.3px;font-size:13.3px;color:#fff;">SKRYTA</div>
<div class="t" style="left:838px;top:464.9px;height:17.3px;line-height:17.3px;font-size:13.3px;color:#fff;">9</div>
<div class="t" style="left:942px;top:464.9px;height:17.3px;line-height:17.3px;font-size:13.3px;color:#fff;">CARKOVANA</div>
<div class="t" style="left:470px;top:486.9px;height:17.3px;line-height:17.3px;font-size:13.3px;color:#fff;">SYMBOL_TEXT</div>
<div class="t" style="left:838px;top:486.9px;height:17.3px;line-height:17.3px;font-size:13.3px;color:#fff;">Červená</div>
<div class="t" style="left:942px;top:486.9px;height:17.3px;line-height:17.3px;font-size:13.3px;color:#fff;">Plná</div>
<div class="t" style="left:470px;top:508.9px;height:17.3px;line-height:17.3px;font-size:13.3px;color:#fff;">TENKA</div>
<div class="t" style="left:838px;top:508.9px;height:17.3px;line-height:17.3px;font-size:13.3px;color:#fff;">Žlutá</div>
<div class="t" style="left:942px;top:508.9px;height:17.3px;line-height:17.3px;font-size:13.3px;color:#fff;">Plná</div>
<div class="t" style="left:470px;top:530.9px;height:17.3px;line-height:17.3px;font-size:13.3px;color:#fff;">TEXT</div>
<div class="t" style="left:838px;top:530.9px;height:17.3px;line-height:17.3px;font-size:13.3px;color:#fff;">Svmodrá</div>
<div class="t" style="left:942px;top:530.9px;height:17.3px;line-height:17.3px;font-size:13.3px;color:#fff;">Plná</div>
<div class="t" style="left:470px;top:552.9px;height:17.3px;line-height:17.3px;font-size:13.3px;color:#fff;">TEXT_TLUSTA</div>
<div class="t" style="left:838px;top:552.9px;height:17.3px;line-height:17.3px;font-size:13.3px;color:#fff;">Červená</div>
<div class="t" style="left:942px;top:552.9px;height:17.3px;line-height:17.3px;font-size:13.3px;color:#fff;">Plná</div>
<div class="t" style="left:470px;top:574.9px;height:17.3px;line-height:17.3px;font-size:13.3px;color:#fff;">TLUSTA</div>
<div class="t" style="left:838px;top:574.9px;height:17.3px;line-height:17.3px;font-size:13.3px;color:#fff;">100</div>
<div class="t" style="left:942px;top:574.9px;height:17.3px;line-height:17.3px;font-size:13.3px;color:#fff;">Plná</div>
<svg width="1300" height="925" style="z-index:2"><path d="M447.5 294 h9 q1 0 1.500 1 l2.800 6 q0.300 1 -0.800 1 h-16 q-1.100 0 -0.800 -1 l2.800 -6 q0.500 -1 1.500 -1Z" fill="#5aa5dc"/><circle cx="695.3" cy="294.6" r="7.600" fill="#f0b840"/><rect x="692.9" y="303.9" width="4.800" height="2.100" fill="#f0b840"/><g fill="#f0b840"><path d="M750 292.20000000000005 L753.9 296.1 L750 300.0 L746.1 296.1Z"/><path d="M750 286.90000000000003 L752 288.90000000000003 L750 290.90000000000003 L748 288.90000000000003Z"/><path d="M757.2 294.1 L759.2 296.1 L757.2 298.1 L755.2 296.1Z"/><path d="M750 301.3 L752 303.3 L750 305.3 L748 303.3Z"/><path d="M742.8 294.1 L744.8 296.1 L742.8 298.1 L740.8 296.1Z"/><rect x="743.8" y="289.90000000000003" width="2.400" height="2.400"/><rect x="753.8" y="289.90000000000003" width="2.400" height="2.400"/><rect x="753.8" y="299.90000000000003" width="2.400" height="2.400"/><rect x="743.8" y="299.90000000000003" width="2.400" height="2.400"/></g><path d="M788.1 294.6 L788.1 291 A4 4 0 0 1 796.1 291 L796.1 295" fill="none" stroke="#5aa5dc" stroke-width="1.900"/><path d="M792 294.6 h13.200 v11.400 h-13.200Z M798.7 297.8 a2.300 2.300 0 0 0 -1.100 4.300 v2.300 h2.200 v-2.300 a2.300 2.300 0 0 0 -1.100 -4.300Z" fill="#5aa5dc" fill-rule="evenodd"/><rect x="817.500" y="289.7" width="15" height="14.600" rx="0.800" fill="#ffffff" stroke="#000"/><path d="M1093 296.5 h19" stroke="#e0e0e0" stroke-width="1"/><path d="M447.5 316 h9 q1 0 1.500 1 l2.800 6 q0.300 1 -0.800 1 h-16 q-1.100 0 -0.800 -1 l2.800 -6 q0.500 -1 1.500 -1Z" fill="#5aa5dc"/><circle cx="695.3" cy="316.6" r="7.600" fill="#f0b840"/><rect x="692.9" y="325.9" width="4.800" height="2.100" fill="#f0b840"/><g fill="#f0b840"><path d="M750 314.20000000000005 L753.9 318.1 L750 322.0 L746.1 318.1Z"/><path d="M750 308.90000000000003 L752 310.90000000000003 L750 312.90000000000003 L748 310.90000000000003Z"/><path d="M757.2 316.1 L759.2 318.1 L757.2 320.1 L755.2 318.1Z"/><path d="M750 323.3 L752 325.3 L750 327.3 L748 325.3Z"/><path d="M742.8 316.1 L744.8 318.1 L742.8 320.1 L740.8 318.1Z"/><rect x="743.8" y="311.90000000000003" width="2.400" height="2.400"/><rect x="753.8" y="311.90000000000003" width="2.400" height="2.400"/><rect x="753.8" y="321.90000000000003" width="2.400" height="2.400"/><rect x="743.8" y="321.90000000000003" width="2.400" height="2.400"/></g><path d="M788.1 316.6 L788.1 313 A4 4 0 0 1 796.1 313 L796.1 317" fill="none" stroke="#5aa5dc" stroke-width="1.900"/><path d="M792 316.6 h13.200 v11.400 h-13.200Z M798.7 319.8 a2.300 2.300 0 0 0 -1.100 4.300 v2.300 h2.200 v-2.300 a2.300 2.300 0 0 0 -1.100 -4.300Z" fill="#5aa5dc" fill-rule="evenodd"/><rect x="817.500" y="311.7" width="15" height="14.600" rx="0.800" fill="#ffffff" stroke="#000"/><path d="M1093 318.5 h19" stroke="#e0e0e0" stroke-width="1"/><path d="M447.5 338 h9 q1 0 1.500 1 l2.800 6 q0.300 1 -0.800 1 h-16 q-1.100 0 -0.800 -1 l2.800 -6 q0.500 -1 1.500 -1Z" fill="#5aa5dc"/><circle cx="695.3" cy="338.6" r="7.600" fill="#f0b840"/><rect x="692.9" y="347.9" width="4.800" height="2.100" fill="#f0b840"/><g fill="#f0b840"><path d="M750 336.20000000000005 L753.9 340.1 L750 344.0 L746.1 340.1Z"/><path d="M750 330.90000000000003 L752 332.90000000000003 L750 334.90000000000003 L748 332.90000000000003Z"/><path d="M757.2 338.1 L759.2 340.1 L757.2 342.1 L755.2 340.1Z"/><path d="M750 345.3 L752 347.3 L750 349.3 L748 347.3Z"/><path d="M742.8 338.1 L744.8 340.1 L742.8 342.1 L740.8 340.1Z"/><rect x="743.8" y="333.90000000000003" width="2.400" height="2.400"/><rect x="753.8" y="333.90000000000003" width="2.400" height="2.400"/><rect x="753.8" y="343.90000000000003" width="2.400" height="2.400"/><rect x="743.8" y="343.90000000000003" width="2.400" height="2.400"/></g><path d="M788.1 338.6 L788.1 335 A4 4 0 0 1 796.1 335 L796.1 339" fill="none" stroke="#5aa5dc" stroke-width="1.900"/><path d="M792 338.6 h13.200 v11.400 h-13.200Z M798.7 341.8 a2.300 2.300 0 0 0 -1.100 4.300 v2.300 h2.200 v-2.300 a2.300 2.300 0 0 0 -1.100 -4.300Z" fill="#5aa5dc" fill-rule="evenodd"/><rect x="817.500" y="333.7" width="15" height="14.600" rx="0.800" fill="#00ffff" stroke="#000"/><path d="M1093 340.5 h19" stroke="#e0e0e0" stroke-width="1"/><path d="M447.5 360 h9 q1 0 1.500 1 l2.800 6 q0.300 1 -0.800 1 h-16 q-1.100 0 -0.800 -1 l2.800 -6 q0.500 -1 1.500 -1Z" fill="#5aa5dc"/><circle cx="695.3" cy="360.6" r="7.600" fill="#f0b840"/><rect x="692.9" y="369.9" width="4.800" height="2.100" fill="#f0b840"/><g fill="#f0b840"><path d="M750 358.20000000000005 L753.9 362.1 L750 366.0 L746.1 362.1Z"/><path d="M750 352.90000000000003 L752 354.90000000000003 L750 356.90000000000003 L748 354.90000000000003Z"/><path d="M757.2 360.1 L759.2 362.1 L757.2 364.1 L755.2 362.1Z"/><path d="M750 367.3 L752 369.3 L750 371.3 L748 369.3Z"/><path d="M742.8 360.1 L744.8 362.1 L742.8 364.1 L740.8 362.1Z"/><rect x="743.8" y="355.90000000000003" width="2.400" height="2.400"/><rect x="753.8" y="355.90000000000003" width="2.400" height="2.400"/><rect x="753.8" y="365.90000000000003" width="2.400" height="2.400"/><rect x="743.8" y="365.90000000000003" width="2.400" height="2.400"/></g><path d="M788.1 360.6 L788.1 357 A4 4 0 0 1 796.1 357 L796.1 361" fill="none" stroke="#5aa5dc" stroke-width="1.900"/><path d="M792 360.6 h13.200 v11.400 h-13.200Z M798.7 363.8 a2.300 2.300 0 0 0 -1.100 4.300 v2.300 h2.200 v-2.300 a2.300 2.300 0 0 0 -1.100 -4.300Z" fill="#5aa5dc" fill-rule="evenodd"/><rect x="817.500" y="355.7" width="15" height="14.600" rx="0.800" fill="#ff00ff" stroke="#000"/><path d="M1093 362.5 h19" stroke="#e0e0e0" stroke-width="1"/><path d="M447.5 382 h9 q1 0 1.500 1 l2.800 6 q0.300 1 -0.800 1 h-16 q-1.100 0 -0.800 -1 l2.800 -6 q0.500 -1 1.500 -1Z" fill="#5aa5dc"/><circle cx="695.3" cy="382.6" r="7.600" fill="#f0b840"/><rect x="692.9" y="391.9" width="4.800" height="2.100" fill="#f0b840"/><g fill="#f0b840"><path d="M750 380.20000000000005 L753.9 384.1 L750 388.0 L746.1 384.1Z"/><path d="M750 374.90000000000003 L752 376.90000000000003 L750 378.90000000000003 L748 376.90000000000003Z"/><path d="M757.2 382.1 L759.2 384.1 L757.2 386.1 L755.2 384.1Z"/><path d="M750 389.3 L752 391.3 L750 393.3 L748 391.3Z"/><path d="M742.8 382.1 L744.8 384.1 L742.8 386.1 L740.8 384.1Z"/><rect x="743.8" y="377.90000000000003" width="2.400" height="2.400"/><rect x="753.8" y="377.90000000000003" width="2.400" height="2.400"/><rect x="753.8" y="387.90000000000003" width="2.400" height="2.400"/><rect x="743.8" y="387.90000000000003" width="2.400" height="2.400"/></g><path d="M788.1 382.6 L788.1 379 A4 4 0 0 1 796.1 379 L796.1 383" fill="none" stroke="#5aa5dc" stroke-width="1.900"/><path d="M792 382.6 h13.200 v11.400 h-13.200Z M798.7 385.8 a2.300 2.300 0 0 0 -1.100 4.300 v2.300 h2.200 v-2.300 a2.300 2.300 0 0 0 -1.100 -4.300Z" fill="#5aa5dc" fill-rule="evenodd"/><rect x="817.500" y="377.7" width="15" height="14.600" rx="0.800" fill="#0000ff" stroke="#000"/><path d="M1093 384.5 h19" stroke="#e0e0e0" stroke-width="1"/><path d="M447.5 404 h9 q1 0 1.500 1 l2.800 6 q0.300 1 -0.800 1 h-16 q-1.100 0 -0.800 -1 l2.800 -6 q0.500 -1 1.500 -1Z" fill="#5aa5dc"/><circle cx="695.3" cy="404.6" r="7.600" fill="#f0b840"/><rect x="692.9" y="413.9" width="4.800" height="2.100" fill="#f0b840"/><g fill="#f0b840"><path d="M750 402.20000000000005 L753.9 406.1 L750 410.0 L746.1 406.1Z"/><path d="M750 396.90000000000003 L752 398.90000000000003 L750 400.90000000000003 L748 398.90000000000003Z"/><path d="M757.2 404.1 L759.2 406.1 L757.2 408.1 L755.2 406.1Z"/><path d="M750 411.3 L752 413.3 L750 415.3 L748 413.3Z"/><path d="M742.8 404.1 L744.8 406.1 L742.8 408.1 L740.8 406.1Z"/><rect x="743.8" y="399.90000000000003" width="2.400" height="2.400"/><rect x="753.8" y="399.90000000000003" width="2.400" height="2.400"/><rect x="753.8" y="409.90000000000003" width="2.400" height="2.400"/><rect x="743.8" y="409.90000000000003" width="2.400" height="2.400"/></g><path d="M788.1 404.6 L788.1 401 A4 4 0 0 1 796.1 401 L796.1 405" fill="none" stroke="#5aa5dc" stroke-width="1.900"/><path d="M792 404.6 h13.200 v11.400 h-13.200Z M798.7 407.8 a2.300 2.300 0 0 0 -1.100 4.300 v2.300 h2.200 v-2.300 a2.300 2.300 0 0 0 -1.100 -4.300Z" fill="#5aa5dc" fill-rule="evenodd"/><rect x="817.500" y="399.7" width="15" height="14.600" rx="0.800" fill="#00ffff" stroke="#000"/><path d="M1093 406.5 h19" stroke="#e0e0e0" stroke-width="1"/><path d="M447.5 426 h9 q1 0 1.500 1 l2.800 6 q0.300 1 -0.800 1 h-16 q-1.100 0 -0.800 -1 l2.800 -6 q0.500 -1 1.500 -1Z" fill="#5aa5dc"/><circle cx="695.3" cy="426.6" r="7.600" fill="#f0b840"/><rect x="692.9" y="435.9" width="4.800" height="2.100" fill="#f0b840"/><g fill="#f0b840"><path d="M750 424.20000000000005 L753.9 428.1 L750 432.0 L746.1 428.1Z"/><path d="M750 418.90000000000003 L752 420.90000000000003 L750 422.90000000000003 L748 420.90000000000003Z"/><path d="M757.2 426.1 L759.2 428.1 L757.2 430.1 L755.2 428.1Z"/><path d="M750 433.3 L752 435.3 L750 437.3 L748 435.3Z"/><path d="M742.8 426.1 L744.8 428.1 L742.8 430.1 L740.8 428.1Z"/><rect x="743.8" y="421.90000000000003" width="2.400" height="2.400"/><rect x="753.8" y="421.90000000000003" width="2.400" height="2.400"/><rect x="753.8" y="431.90000000000003" width="2.400" height="2.400"/><rect x="743.8" y="431.90000000000003" width="2.400" height="2.400"/></g><path d="M788.1 426.6 L788.1 423 A4 4 0 0 1 796.1 423 L796.1 427" fill="none" stroke="#5aa5dc" stroke-width="1.900"/><path d="M792 426.6 h13.200 v11.400 h-13.200Z M798.7 429.8 a2.300 2.300 0 0 0 -1.100 4.300 v2.300 h2.200 v-2.300 a2.300 2.300 0 0 0 -1.100 -4.300Z" fill="#5aa5dc" fill-rule="evenodd"/><rect x="817.500" y="421.7" width="15" height="14.600" rx="0.800" fill="#ff0000" stroke="#000"/><path d="M1093 428.5 h19" stroke="#e0e0e0" stroke-width="1"/><path d="M447.5 448 h9 q1 0 1.500 1 l2.800 6 q0.300 1 -0.800 1 h-16 q-1.100 0 -0.800 -1 l2.800 -6 q0.500 -1 1.500 -1Z" fill="#5aa5dc"/><circle cx="695.3" cy="448.6" r="7.600" fill="#f0b840"/><rect x="692.9" y="457.9" width="4.800" height="2.100" fill="#f0b840"/><g fill="#f0b840"><path d="M750 446.20000000000005 L753.9 450.1 L750 454.0 L746.1 450.1Z"/><path d="M750 440.90000000000003 L752 442.90000000000003 L750 444.90000000000003 L748 442.90000000000003Z"/><path d="M757.2 448.1 L759.2 450.1 L757.2 452.1 L755.2 450.1Z"/><path d="M750 455.3 L752 457.3 L750 459.3 L748 457.3Z"/><path d="M742.8 448.1 L744.8 450.1 L742.8 452.1 L740.8 450.1Z"/><rect x="743.8" y="443.90000000000003" width="2.400" height="2.400"/><rect x="753.8" y="443.90000000000003" width="2.400" height="2.400"/><rect x="753.8" y="453.90000000000003" width="2.400" height="2.400"/><rect x="743.8" y="453.90000000000003" width="2.400" height="2.400"/></g><path d="M788.1 448.6 L788.1 445 A4 4 0 0 1 796.1 445 L796.1 449" fill="none" stroke="#5aa5dc" stroke-width="1.900"/><path d="M792 448.6 h13.200 v11.400 h-13.200Z M798.7 451.8 a2.300 2.300 0 0 0 -1.100 4.300 v2.300 h2.200 v-2.300 a2.300 2.300 0 0 0 -1.100 -4.300Z" fill="#5aa5dc" fill-rule="evenodd"/><rect x="817.500" y="443.7" width="15" height="14.600" rx="0.800" fill="#ffffff" stroke="#000"/><path d="M1093 450.5 h19" stroke="#e0e0e0" stroke-width="1"/><path d="M447.5 470 h9 q1 0 1.500 1 l2.800 6 q0.300 1 -0.800 1 h-16 q-1.100 0 -0.800 -1 l2.800 -6 q0.500 -1 1.500 -1Z" fill="#5aa5dc"/><circle cx="695.3" cy="470.6" r="7.600" fill="#f0b840"/><rect x="692.9" y="479.9" width="4.800" height="2.100" fill="#f0b840"/><g fill="#f0b840"><path d="M750 468.20000000000005 L753.9 472.1 L750 476.0 L746.1 472.1Z"/><path d="M750 462.90000000000003 L752 464.90000000000003 L750 466.90000000000003 L748 464.90000000000003Z"/><path d="M757.2 470.1 L759.2 472.1 L757.2 474.1 L755.2 472.1Z"/><path d="M750 477.3 L752 479.3 L750 481.3 L748 479.3Z"/><path d="M742.8 470.1 L744.8 472.1 L742.8 474.1 L740.8 472.1Z"/><rect x="743.8" y="465.90000000000003" width="2.400" height="2.400"/><rect x="753.8" y="465.90000000000003" width="2.400" height="2.400"/><rect x="753.8" y="475.90000000000003" width="2.400" height="2.400"/><rect x="743.8" y="475.90000000000003" width="2.400" height="2.400"/></g><path d="M788.1 470.6 L788.1 467 A4 4 0 0 1 796.1 467 L796.1 471" fill="none" stroke="#5aa5dc" stroke-width="1.900"/><path d="M792 470.6 h13.200 v11.400 h-13.200Z M798.7 473.8 a2.300 2.300 0 0 0 -1.100 4.300 v2.300 h2.200 v-2.300 a2.300 2.300 0 0 0 -1.100 -4.300Z" fill="#5aa5dc" fill-rule="evenodd"/><rect x="817.500" y="465.7" width="15" height="14.600" rx="0.800" fill="#c0c0c0" stroke="#000"/><path d="M1093 472.5 h19" stroke="#e0e0e0" stroke-width="1"/><path d="M447.5 492 h9 q1 0 1.500 1 l2.800 6 q0.300 1 -0.800 1 h-16 q-1.100 0 -0.800 -1 l2.800 -6 q0.500 -1 1.500 -1Z" fill="#5aa5dc"/><circle cx="695.3" cy="492.6" r="7.600" fill="#f0b840"/><rect x="692.9" y="501.9" width="4.800" height="2.100" fill="#f0b840"/><g fill="#f0b840"><path d="M750 490.20000000000005 L753.9 494.1 L750 498.0 L746.1 494.1Z"/><path d="M750 484.90000000000003 L752 486.90000000000003 L750 488.90000000000003 L748 486.90000000000003Z"/><path d="M757.2 492.1 L759.2 494.1 L757.2 496.1 L755.2 494.1Z"/><path d="M750 499.3 L752 501.3 L750 503.3 L748 501.3Z"/><path d="M742.8 492.1 L744.8 494.1 L742.8 496.1 L740.8 494.1Z"/><rect x="743.8" y="487.90000000000003" width="2.400" height="2.400"/><rect x="753.8" y="487.90000000000003" width="2.400" height="2.400"/><rect x="753.8" y="497.90000000000003" width="2.400" height="2.400"/><rect x="743.8" y="497.90000000000003" width="2.400" height="2.400"/></g><path d="M788.1 492.6 L788.1 489 A4 4 0 0 1 796.1 489 L796.1 493" fill="none" stroke="#5aa5dc" stroke-width="1.900"/><path d="M792 492.6 h13.200 v11.400 h-13.200Z M798.7 495.8 a2.300 2.300 0 0 0 -1.100 4.300 v2.300 h2.200 v-2.300 a2.300 2.300 0 0 0 -1.100 -4.300Z" fill="#5aa5dc" fill-rule="evenodd"/><rect x="817.500" y="487.7" width="15" height="14.600" rx="0.800" fill="#ff0000" stroke="#000"/><path d="M1093 494.5 h19" stroke="#e0e0e0" stroke-width="1"/><path d="M447.5 514 h9 q1 0 1.500 1 l2.800 6 q0.300 1 -0.800 1 h-16 q-1.100 0 -0.800 -1 l2.800 -6 q0.500 -1 1.500 -1Z" fill="#5aa5dc"/><circle cx="695.3" cy="514.6" r="7.600" fill="#f0b840"/><rect x="692.9" y="523.9" width="4.800" height="2.100" fill="#f0b840"/><g fill="#f0b840"><path d="M750 512.2 L753.9 516.1 L750 520.0 L746.1 516.1Z"/><path d="M750 506.90000000000003 L752 508.90000000000003 L750 510.90000000000003 L748 508.90000000000003Z"/><path d="M757.2 514.1 L759.2 516.1 L757.2 518.1 L755.2 516.1Z"/><path d="M750 521.3000000000001 L752 523.3000000000001 L750 525.3000000000001 L748 523.3000000000001Z"/><path d="M742.8 514.1 L744.8 516.1 L742.8 518.1 L740.8 516.1Z"/><rect x="743.8" y="509.90000000000003" width="2.400" height="2.400"/><rect x="753.8" y="509.90000000000003" width="2.400" height="2.400"/><rect x="753.8" y="519.9" width="2.400" height="2.400"/><rect x="743.8" y="519.9" width="2.400" height="2.400"/></g><path d="M788.1 514.6 L788.1 511 A4 4 0 0 1 796.1 511 L796.1 515" fill="none" stroke="#5aa5dc" stroke-width="1.900"/><path d="M792 514.6 h13.200 v11.400 h-13.200Z M798.7 517.8 a2.300 2.300 0 0 0 -1.100 4.300 v2.300 h2.200 v-2.300 a2.300 2.300 0 0 0 -1.100 -4.300Z" fill="#5aa5dc" fill-rule="evenodd"/><rect x="817.500" y="509.7" width="15" height="14.600" rx="0.800" fill="#ffff00" stroke="#000"/><path d="M1093 516.5 h19" stroke="#e0e0e0" stroke-width="1"/><path d="M447.5 536 h9 q1 0 1.500 1 l2.800 6 q0.300 1 -0.800 1 h-16 q-1.100 0 -0.800 -1 l2.800 -6 q0.500 -1 1.500 -1Z" fill="#5aa5dc"/><circle cx="695.3" cy="536.6" r="7.600" fill="#f0b840"/><rect x="692.9" y="545.9" width="4.800" height="2.100" fill="#f0b840"/><g fill="#f0b840"><path d="M750 534.2 L753.9 538.1 L750 542.0 L746.1 538.1Z"/><path d="M750 528.9 L752 530.9 L750 532.9 L748 530.9Z"/><path d="M757.2 536.1 L759.2 538.1 L757.2 540.1 L755.2 538.1Z"/><path d="M750 543.3000000000001 L752 545.3000000000001 L750 547.3000000000001 L748 545.3000000000001Z"/><path d="M742.8 536.1 L744.8 538.1 L742.8 540.1 L740.8 538.1Z"/><rect x="743.8" y="531.9" width="2.400" height="2.400"/><rect x="753.8" y="531.9" width="2.400" height="2.400"/><rect x="753.8" y="541.9" width="2.400" height="2.400"/><rect x="743.8" y="541.9" width="2.400" height="2.400"/></g><path d="M788.1 536.6 L788.1 533 A4 4 0 0 1 796.1 533 L796.1 537" fill="none" stroke="#5aa5dc" stroke-width="1.900"/><path d="M792 536.6 h13.200 v11.400 h-13.200Z M798.7 539.8 a2.300 2.300 0 0 0 -1.100 4.300 v2.300 h2.200 v-2.300 a2.300 2.300 0 0 0 -1.100 -4.300Z" fill="#5aa5dc" fill-rule="evenodd"/><rect x="817.500" y="531.7" width="15" height="14.600" rx="0.800" fill="#00ffff" stroke="#000"/><path d="M1093 538.5 h19" stroke="#e0e0e0" stroke-width="1"/><path d="M447.5 558 h9 q1 0 1.500 1 l2.800 6 q0.300 1 -0.800 1 h-16 q-1.100 0 -0.800 -1 l2.800 -6 q0.500 -1 1.500 -1Z" fill="#5aa5dc"/><circle cx="695.3" cy="558.6" r="7.600" fill="#f0b840"/><rect x="692.9" y="567.9" width="4.800" height="2.100" fill="#f0b840"/><g fill="#f0b840"><path d="M750 556.2 L753.9 560.1 L750 564.0 L746.1 560.1Z"/><path d="M750 550.9 L752 552.9 L750 554.9 L748 552.9Z"/><path d="M757.2 558.1 L759.2 560.1 L757.2 562.1 L755.2 560.1Z"/><path d="M750 565.3000000000001 L752 567.3000000000001 L750 569.3000000000001 L748 567.3000000000001Z"/><path d="M742.8 558.1 L744.8 560.1 L742.8 562.1 L740.8 560.1Z"/><rect x="743.8" y="553.9" width="2.400" height="2.400"/><rect x="753.8" y="553.9" width="2.400" height="2.400"/><rect x="753.8" y="563.9" width="2.400" height="2.400"/><rect x="743.8" y="563.9" width="2.400" height="2.400"/></g><path d="M788.1 558.6 L788.1 555 A4 4 0 0 1 796.1 555 L796.1 559" fill="none" stroke="#5aa5dc" stroke-width="1.900"/><path d="M792 558.6 h13.200 v11.400 h-13.200Z M798.7 561.8 a2.300 2.300 0 0 0 -1.100 4.300 v2.300 h2.200 v-2.300 a2.300 2.300 0 0 0 -1.100 -4.300Z" fill="#5aa5dc" fill-rule="evenodd"/><rect x="817.500" y="553.7" width="15" height="14.600" rx="0.800" fill="#ff0000" stroke="#000"/><path d="M1093 560.5 h19" stroke="#e0e0e0" stroke-width="1"/><path d="M444 585 l4 4 l12 -11" fill="none" stroke="#5d9c6a" stroke-width="1.300"/><circle cx="695.3" cy="580.6" r="7.600" fill="#f0b840"/><rect x="692.9" y="589.9" width="4.800" height="2.100" fill="#f0b840"/><g fill="#f0b840"><path d="M750 578.2 L753.9 582.1 L750 586.0 L746.1 582.1Z"/><path d="M750 572.9 L752 574.9 L750 576.9 L748 574.9Z"/><path d="M757.2 580.1 L759.2 582.1 L757.2 584.1 L755.2 582.1Z"/><path d="M750 587.3000000000001 L752 589.3000000000001 L750 591.3000000000001 L748 589.3000000000001Z"/><path d="M742.8 580.1 L744.8 582.1 L742.8 584.1 L740.8 582.1Z"/><rect x="743.8" y="575.9" width="2.400" height="2.400"/><rect x="753.8" y="575.9" width="2.400" height="2.400"/><rect x="753.8" y="585.9" width="2.400" height="2.400"/><rect x="743.8" y="585.9" width="2.400" height="2.400"/></g><path d="M788.1 580.6 L788.1 577 A4 4 0 0 1 796.1 577 L796.1 581" fill="none" stroke="#5aa5dc" stroke-width="1.900"/><path d="M792 580.6 h13.200 v11.400 h-13.200Z M798.7 583.8 a2.300 2.300 0 0 0 -1.100 4.300 v2.300 h2.200 v-2.300 a2.300 2.300 0 0 0 -1.100 -4.300Z" fill="#5aa5dc" fill-rule="evenodd"/><rect x="817.500" y="575.7" width="15" height="14.600" rx="0.800" fill="#00ff00" stroke="#000"/><path d="M1093 582.5 h19" stroke="#e0e0e0" stroke-width="1"/></svg>
<div class="a" style="left:935px;top:436px;width:50px;height:29px;border:5px solid #ed1c24;z-index:3"></div>
<div class="t" style="left:991px;top:436.5px;height:24px;line-height:24px;font-size:20px;color:#ed1c24;font-weight:bold;z-index:3">1</div>
<div class="a" style="left:421px;top:914px;width:832px;height:11px;background:#39414c;"></div>
<div class="a" style="left:444px;top:914px;width:565px;height:11px;background:#4b5665;"></div>
<svg width="1300" height="925"><path d="M434 917 l-4 4 l4 4 M1242 917 l4 4 l-4 4" fill="none" stroke="#8b939d"/></svg>
<div class="a" style="left:1265px;top:175px;width:627px;height:750px;background:#1f252e;"></div>
<svg width="1892" height="925"><circle cx="1810" cy="282" r="46" fill="#3d4551"/><path d="M1838 192.500 h10" stroke="#e6e6e6" stroke-width="2.500"/><rect x="1860" y="187" width="7" height="7" fill="none" stroke="#e6e6e6" stroke-width="1.800"/><path d="M1862 185.500 h7 v7" fill="none" stroke="#e6e6e6" stroke-width="1.300"/><path d="M1881 186 l8 8 M1889 186 l-8 8" stroke="#e6e6e6" stroke-width="2.200"/><path d="M1845 274.500 h7 M1845 281.500 h7 M1845 288.500 h7" stroke="#5a636f" stroke-width="2.500"/></svg>
<div class="a" style="left:1265px;top:789px;width:258px;height:134px;background:#3a414d;border-radius:0 4px 4px 0"></div>
<div class="a" style="left:1265px;top:893px;width:258px;height:30px;background:#4a515f;border-radius:0 0 4px 0"></div>
<svg width="1892" height="925"><path d="M1492 914.500 l10.500 -10.500 l10.500 10.500" fill="none" stroke="#d0d0d0" stroke-width="2"/></svg>
<div class="a dlg" style="left:1112px;top:198px;width:733px;height:531px;background:#f0f0f0;border-radius:8px;box-shadow:0 14px 26px -6px rgba(0,0,0,.45),0 0 0 1px rgba(0,0,0,.22);z-index:10;font-size:12px;color:#000">
<div class="a" style="left:0;top:0;width:733px;height:37px;background:#f3f3f3;border-radius:8px 8px 0 0"></div>
<svg width="733" height="531"><defs><linearGradient id="ig" x1="0" y1="0" x2="1" y2="1"><stop offset="0" stop-color="#1478e0"/><stop offset="0.6" stop-color="#2b9cf2"/><stop offset="1" stop-color="#7fd0ff"/></linearGradient></defs><rect x="9" y="8" width="20" height="20" fill="url(#ig)"/><path d="M17 12.500 L14 21.500" stroke="#fff" stroke-width="1.500"/><circle cx="17" cy="12.500" r="1.800" fill="#fff"/><circle cx="14" cy="21.500" r="1.800" fill="#fff"/><path d="M18 18 l3 -1.500 l-1.500 5 l6 -4" fill="none" stroke="#fff" stroke-width="1.400"/><path d="M706 12 l12 12 M718 12 l-12 12" stroke="#8a8a8a" stroke-width="1.100"/></svg>
<div class="t" style="left:35px;top:9px;height:20px;line-height:20px;font-size:14.6px;letter-spacing:0;color:#9a9a9a;font-family:'Liberation Sans',sans-serif">Správce typů čar</div>
<div class="a" style="left:9px;top:51px;width:712px;height:252px;background:#fff;border:1px solid #7a8594"></div>
<div class="a" style="left:197px;top:54px;width:1px;height:23px;background:#e2e2e2"></div>
<div class="a" style="left:328px;top:54px;width:1px;height:23px;background:#e2e2e2"></div>
<div class="a" style="left:665px;top:54px;width:1px;height:23px;background:#e2e2e2"></div>
<div class="t" style="left:17px;top:57.5px;height:16px;line-height:16px;">Název typu čáry</div>
<div class="t" style="left:204px;top:57.5px;height:16px;line-height:16px;">Výskyt</div>
<div class="t" style="left:335px;top:57.5px;height:16px;line-height:16px;">Popis typu čáry</div>
<div class="t" style="left:19px;top:81.5px;height:16px;line-height:16px;">Plná</div>
<div class="t" style="left:19px;top:105.5px;height:16px;line-height:16px;">CERCHOVANA</div>
<div class="t" style="left:19px;top:129.5px;height:16px;line-height:16px;">CARKOVANA</div>
<div class="t" style="left:337px;top:81.5px;height:16px;line-height:16px;">Solid line</div>
<div class="t" style="left:337px;top:105.5px;height:16px;line-height:16px;">-- . -- . --</div>
<div class="t" style="left:337px;top:129.5px;height:16px;line-height:16px;">-- -- --</div>
<svg width="733" height="531"><g stroke="#000" stroke-width="1"><path d="M203 89.500 h121"/><path d="M203 113.500 h121" stroke-dasharray="14 8 3 8 18 8 3 8 18 8 3 8 14 0"/><path d="M203 137.500 h121" stroke-dasharray="19 12 24 11 24 12 19 0"/></g></svg>
<div class="a" style="left:9px;top:313px;width:712px;height:127px;border:1px solid #dcdcdc"></div>
<div class="t" style="left:15px;top:306px;height:16px;line-height:16px;background:#f0f0f0;padding:0 3px">Podrobnosti</div>
<div class="t" style="left:51px;top:339.5px;height:16px;line-height:16px;">Název:</div>
<div class="t" style="left:58px;top:387.8px;height:16px;line-height:16px;">Popis:</div>
<div class="a" style="left:101px;top:334px;width:213px;height:26px;border:1px solid #e3e3e3;background:#f2f2f2"></div>
<div class="a" style="left:101px;top:376px;width:213px;height:26px;border:1px solid #e3e3e3;background:#f2f2f2"></div>
<div class="t" style="left:376px;top:337.5px;height:16px;line-height:16px;">Globální</div>
<div class="t" style="left:331px;top:385.5px;height:16px;line-height:16px;">Aktuální měřítko</div>
<div class="a" style="left:479px;top:334px;width:184px;height:27px;background:#fff;border-bottom:1px solid #868686;border-radius:2px"></div>
<div class="a" style="left:479px;top:376px;width:184px;height:27px;background:#fff;border-bottom:1px solid #868686;border-radius:2px"></div>
<div class="t" style="left:484px;top:336.5px;height:16px;line-height:16px;">1</div>
<div class="t" style="left:484px;top:378.5px;height:16px;line-height:16px;">1</div>
<div class="a" style="left:23px;top:417px;width:16px;height:16px;background:#0a60bd;border-radius:3px"></div>
<svg width="733" height="531"><path d="M27 425 l3 3 l6 -6" fill="none" stroke="#fff" stroke-width="1.300"/></svg>
<div class="t" style="left:42px;top:417.5px;height:16px;line-height:16px;">Pro změnu měřítka použít jednotky výkr.prostoru</div>
<div class="a" style="left:9px;top:443px;width:705px;height:27px;border-top:1px solid #9a9a9a;border-left:1px solid #9a9a9a;border-right:1px solid #fff;border-bottom:1px solid #fff"></div>
<div class="t" style="left:10px;top:445px;height:16px;line-height:16px;">Aktuální typ čáry: DleHlad</div>
<div class="a" style="left:12px;top:492px;width:31px;height:26px;background:#fdfdfd;border:1px solid #d0d0d0;border-bottom-color:#bcbcbc;border-radius:4px;text-align:center;line-height:26px;white-space:nowrap"></div>
<div class="a" style="left:122px;top:492px;width:86px;height:26px;background:#fdfdfd;border:1px solid #d0d0d0;border-bottom-color:#bcbcbc;border-radius:4px;text-align:center;line-height:26px;white-space:nowrap">Aktuální</div>
<div class="a" style="left:219px;top:492px;width:82px;height:26px;background:#fdfdfd;border:1px solid #d0d0d0;border-bottom-color:#bcbcbc;border-radius:4px;text-align:center;line-height:26px;white-space:nowrap">Načíst...</div>
<div class="a" style="left:311px;top:492px;width:108px;height:26px;background:#fdfdfd;border:1px solid #d0d0d0;border-bottom-color:#bcbcbc;border-radius:4px;text-align:center;line-height:26px;white-space:nowrap">Skrýt Podrobnosti</div>
<div class="a" style="left:428px;top:492px;width:86px;height:26px;background:#fdfdfd;border:1px solid #d0d0d0;border-bottom-color:#bcbcbc;border-radius:4px;text-align:center;line-height:26px;white-space:nowrap">Vymazat</div>
<div class="a" style="left:554px;top:492px;width:79px;height:26px;background:#fdfdfd;border:1px solid #d0d0d0;border-bottom-color:#bcbcbc;border-radius:4px;text-align:center;line-height:26px;white-space:nowrap">OK</div>
<div class="a" style="left:640px;top:492px;width:79px;height:26px;background:#fdfdfd;border:1px solid #d0d0d0;border-bottom-color:#bcbcbc;border-radius:4px;text-align:center;line-height:26px;white-space:nowrap">Storno</div>
<div class="a" style="left:18px;top:496px;width:18px;height:18px;border-radius:9px;background:#3fa5f5;color:#fff;font-weight:bold;font-size:13px;line-height:18px;text-align:center;font-family:'Liberation Sans',sans-serif">?</div>
<div class="a" style="left:217px;top:487px;width:85px;height:32px;border:5px solid #ed1c24"></div>
<div class="t" style="left:200.5px;top:473px;height:24px;line-height:24px;font-size:19px;letter-spacing:0;font-weight:bold;color:#ed1c24;font-family:'Liberation Sans',sans-serif">2</div>
<svg width="733" height="531"><g fill="#b5b5b5"><rect x="727" y="519" width="2" height="2"/><rect x="727" y="523" width="2" height="2"/><rect x="723" y="523" width="2" height="2"/><rect x="727" y="527" width="2" height="2"/><rect x="723" y="527" width="2" height="2"/><rect x="719" y="527" width="2" height="2"/></g></svg>
</div>
</body></html>
